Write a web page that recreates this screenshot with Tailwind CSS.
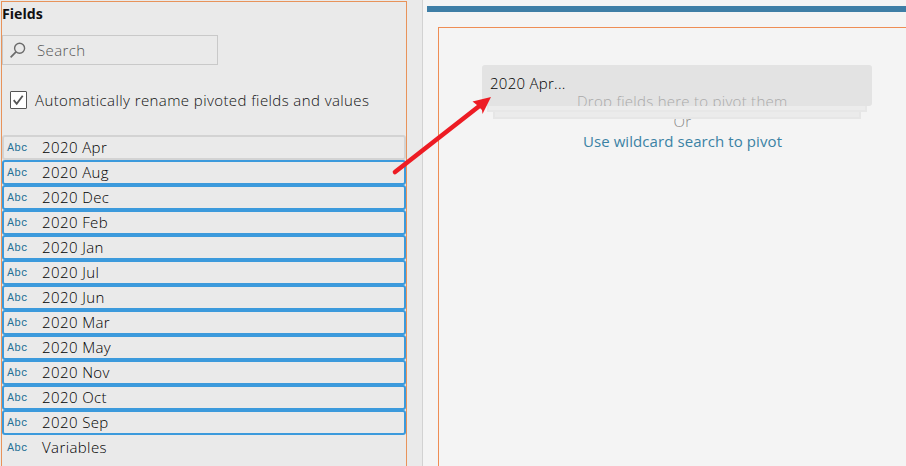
<!DOCTYPE html>
<html lang="en">
<head>
<meta charset="utf-8">
<title>Pivot fields</title>
<script src="https://cdn.jsdelivr.net/npm/@tailwindcss/browser@4"></script>
</head>
<body class="relative flex h-[466px] w-[906px] overflow-hidden bg-[#f4f4f4] font-['Open_Sans','Noto_Sans',sans-serif] text-[15px] font-light tracking-[0.27px] text-black">
<aside class="flex w-[423px] shrink-0 border-r border-[#d2d2d2] bg-[#eaeaea] pl-px pt-px">
  <div class="h-[480px] w-[406px] border border-[#e8935a]">
    <h1 class="h-[33px] pt-[2px] text-[14.2px] leading-[20px] font-bold tracking-normal text-[#111]">Fields</h1>
    <div class="flex h-[30px] w-[216px] items-center border border-[#c9c9c9] pl-[7px] text-[#555]">
      <svg class="h-[18px] w-[18px]" viewBox="0 0 18 18" fill="none" stroke="#6b6b6b" stroke-width="1.4"><circle cx="9.6" cy="7.3" r="5"/><path d="M6 10.8 0.6 16.4" stroke-width="1.7"/></svg>
      <span class="ml-[9px] tracking-[0.4px]">Search</span>
    </div>
    <label class="mt-[26px] flex h-[18px] items-center pl-[8px]">
      <span class="flex h-[18px] w-[17px] items-center justify-center rounded-[1px] border border-[#555] bg-white"><svg class="h-[14px] w-[13px]" viewBox="0 0 13 14" fill="none" stroke="#555" stroke-width="1.8"><path d="m1.7 7.2 3 3.6 6-8"/></svg></span>
      <span class="ml-[8px] whitespace-nowrap tracking-[0.41px] text-[#111]">Automatically rename pivoted fields and values</span>
    </label>
    <ul id="fields" class="mt-[26px]"></ul>
  </div>
</aside>
<main class="flex min-w-0 flex-1 flex-col pl-[4px] pt-[6px]">
  <div class="h-[6px] shrink-0 bg-[#3e7ea6]"></div>
  <section class="relative ml-[11px] mt-[15px] h-[450px] w-[489px] shrink-0 border border-[#ee8d54] pt-[83px] text-center leading-[20px]">
    <p class="text-[#888]">Or</p>
    <p class="font-normal tracking-[0.08px] text-[#3b82a4]">Use wildcard search to pivot</p>
    <div class="absolute left-[54px] top-[82px] h-[9px] w-[368px] border-2 border-[#e6e6e6] bg-[#ebebeb]"></div>
    <div class="absolute left-[48px] top-[76px] h-[8px] w-[380px] border-2 border-[#e7e7e7] bg-[#ececec]"></div>
    <div class="absolute left-[43px] top-[37px] h-[41px] w-[390px] overflow-hidden rounded-[3px] bg-[#e3e3e3]">
      <span class="absolute left-[8px] top-[8px]">2020 Apr...</span>
      <span class="absolute left-[95px] top-[26px] whitespace-nowrap text-[#aaa]">Drop fields here to pivot them</span>
    </div>
  </section>
</main>
<svg class="absolute left-0 top-0" width="906" height="466"><path d="M395 172 480 105.5" stroke="#ed1c24" stroke-width="4.6" stroke-linecap="round"/><path d="M491 97 472.5 101.5 477 105 482 110 482.5 114Z" fill="#ed1c24"/></svg>
<script>
const names=['2020 Apr','2020 Aug','2020 Dec','2020 Feb','2020 Jan','2020 Jul','2020 Jun','2020 Mar','2020 May','2020 Nov','2020 Oct','2020 Sep','Variables'];
document.getElementById('fields').innerHTML=names.map((n,i)=>{
  const b=i===0?'border-[#d3d3d3]':i===12?'border-transparent':'border-[#3c9adc]';
  return `<li class="flex h-[25px] w-[404px] items-center rounded-[3px] border-2 pl-[3px] ${b}"><span class="w-[35px] pt-px font-['Roboto'] text-[11px] font-normal tracking-[0.4px] text-[#1f7096]">Abc</span><span class="tracking-[0.4px]">${n}</span></li>`;
}).join('');
</script>
</body>
</html>
